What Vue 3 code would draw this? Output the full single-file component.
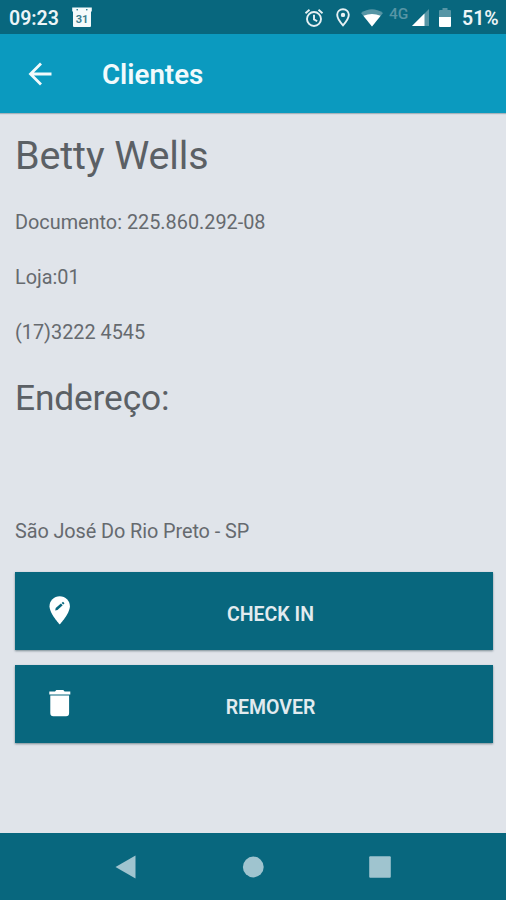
<script setup>
const details = ['Documento: 225.860.292-08', 'Loja:01', '(17)3222 4545']
const actions = [
  { label: 'CHECK IN', icon: 'pin' },
  { label: 'REMOVER', icon: 'trash' }
]
</script>

<template>
  <div class="screen">
    <div class="status">
      <span class="clock">09:23</span>
      <svg class="calendar" width="20" height="21" viewBox="0 0 20 21">
        <path d="M.2 .5h19.600v4h-.8V19q0 1-1 1H2q-1 0-1-1V4.500H.2z" fill="#f4fafb" />
        <circle cx="5.200" cy="2.800" r=".8" fill="#08677e" />
        <circle cx="14.800" cy="2.800" r=".8" fill="#08677e" />
        <text x="10" y="15.600" text-anchor="middle" font-size="11" font-weight="700" fill="#3d7e8f">31</text>
      </svg>
      <svg class="alarm" width="20" height="20" viewBox="0 0 20 20" fill="none" stroke="#e6f0f3" stroke-width="1.900">
        <circle cx="10" cy="11" r="7" />
        <path d="M1.500 5.200 5.500 1.800M18.500 5.200l-4-3.400M10 6.800v4.600l3.200 1.900" />
      </svg>
      <svg class="place" width="14" height="19" viewBox="0 0 14 19">
        <path d="M7 1.200C3.600 1.200 1.200 3.700 1.200 6.800 1.200 11 7 17.300 7 17.300s5.800-6.300 5.800-10.500C12.800 3.700 10.400 1.200 7 1.200z" fill="none" stroke="#e6f0f3" stroke-width="1.900" />
        <circle cx="7" cy="6.900" r="2.200" fill="#e6f0f3" />
      </svg>
      <svg class="wifi" width="22" height="18" viewBox="0 0 22 18">
        <path d="M0 4Q11-3.500 22 4L11 17.500z" fill="#5795a5" />
        <path d="M2.400 6.800Q11 3 19.600 6.800L11 17.500z" fill="#fff" />
      </svg>
      <span class="network">4G</span>
      <svg class="signal" width="17" height="17" viewBox="0 0 17 17">
        <path d="M0 17 17 0v17z" fill="#5795a5" />
        <path d="M0 17 12.500 4.500V17z" fill="#fff" />
      </svg>
      <svg class="battery" width="12" height="19" viewBox="0 0 12 19">
        <path d="M3.500 0h5v2H11q1 0 1 1v7H0V3q0-1 1-1h2.500z" fill="#5795a5" />
        <path d="M0 9h12v9q0 1-1 1H1q-1 0-1-1z" fill="#fff" />
      </svg>
      <span class="percent">51%</span>
    </div>

    <header class="appbar">
      <svg width="24" height="24" viewBox="0 0 24 24" fill="none" stroke="#f2fafc" stroke-width="2.800">
        <path d="M23.500 12H2.500M13 1.500 2.500 12 13 22.500" />
      </svg>
      <span class="heading">Clientes</span>
    </header>

    <main class="content">
      <h1>Betty Wells</h1>
      <p v-for="line in details" :key="line">{{ line }}</p>
      <h2>Endereço:</h2>
      <p class="city">São José Do Rio Preto - SP</p>
      <div class="actions">
        <button v-for="action in actions" :key="action.label" type="button">
          <svg v-if="action.icon === 'pin'" width="22" height="30" viewBox="0 0 22 30">
            <path d="M10.700 .3C4.900.3.500 4.700.500 10.300.500 17.500 10.700 28.500 10.700 28.500S20.900 17.500 20.900 10.300C20.900 4.700 16.500.3 10.700.3z" fill="#fff" />
            <path d="m6.200 14.600.5-2.500 5.200-4.600 1.800 1.800-5.200 4.700zM12.600 6.900l1.400-1.200 1.500 1.600-1.200 1.300z" fill="#08677e" />
          </svg>
          <svg v-else width="22" height="30" viewBox="0 0 22 30">
            <path d="M.3 2.500h5.700L7.300 1h7l1.300 1.500h5.700v3H.3zM1.300 6.500h18.800V24q0 3.300-3 3.300H4.300q-3 0-3-3.300z" fill="#fff" />
          </svg>
          <span class="label">{{ action.label }}</span>
        </button>
      </div>
    </main>

    <nav class="navbar">
      <svg width="22" height="24" viewBox="0 0 22 24"><path d="M.5 12 20.500.500v23z" fill="#9fc4cf" /></svg>
      <svg width="22" height="24" viewBox="0 0 22 24"><circle cx="11.300" cy="12" r="10.400" fill="#9fc4cf" /></svg>
      <svg width="22" height="24" viewBox="0 0 22 24"><rect x=".2" y="1.200" width="21.600" height="21.600" rx="1" fill="#9fc4cf" /></svg>
    </nav>
  </div>
</template>

<style>
body {
  margin: 0;
}
</style>

<style scoped>
.screen {
  display: flex;
  flex-direction: column;
  width: 506px;
  height: 900px;
  overflow: hidden;
  background: #e0e4ea;
  font-family: Roboto, sans-serif;
  color: #5b6065;
}
svg {
  display: block;
  flex: none;
}
.status {
  box-sizing: border-box;
  flex: none;
  display: flex;
  align-items: center;
  height: 34px;
  padding: 2px 8px 0 9px;
  background: #08677e;
  color: #edf5f7;
  font-size: 19.500px;
  font-weight: 600;
  line-height: 32px;
  white-space: nowrap;
}
.clock {
  width: 63px;
  padding-top: 1px;
}
.calendar {
  margin-bottom: 2px;
}
.alarm {
  margin-left: auto;
}
.place {
  margin-left: 12px;
}
.wifi {
  margin-left: 11px;
}
.alarm,
.place,
.wifi {
  margin-bottom: 1px;
}
.network {
  width: 23px;
  margin-left: 6px;
  padding-bottom: 8px;
  font-size: 15.500px;
  font-weight: 500;
  line-height: 20px;
  color: #5795a5;
}
.signal {
  margin-bottom: 1px;
}
.battery {
  margin-left: 10px;
  margin-bottom: 2px;
}
.percent {
  width: 36px;
  margin-left: 11px;
  padding-top: 1px;
}
.appbar {
  position: relative;
  box-sizing: border-box;
  flex: none;
  display: flex;
  align-items: center;
  height: 79px;
  padding-left: 28px;
  background: #0b9abf;
  box-shadow: 0 1px 1px rgba(60, 90, 100, 0.35);
  color: #f2fafc;
}
.heading {
  margin-left: 50px;
  padding-top: 2px;
  font-size: 27.700px;
  font-weight: 600;
  line-height: 36px;
}
.content {
  flex: 1;
  padding: 20px 13px 0 15px;
}
h1,
h2,
p {
  margin: 0;
  font-weight: 370;
  white-space: nowrap;
}
h1 {
  height: 46px;
  margin-bottom: 31px;
  font-size: 39.500px;
  line-height: 46px;
  letter-spacing: -0.120px;
}
p {
  height: 26px;
  margin-bottom: 29px;
  font-size: 19.850px;
  line-height: 26px;
  color: #666a6f;
}
h2 {
  height: 42px;
  margin-top: 31px;
  margin-bottom: 100px;
  font-size: 35.300px;
  line-height: 42px;
  letter-spacing: -0.150px;
}
.city {
  margin-bottom: 27px;
  letter-spacing: -0.080px;
}
.actions {
  display: grid;
  gap: 15px;
}
button {
  display: flex;
  align-items: center;
  height: 78px;
  padding: 0 34px;
  border: 0;
  background: #08677e;
  box-shadow: 0 1px 2px rgba(20, 50, 60, 0.5);
  font-family: inherit;
  font-size: 19.500px;
  font-weight: 600;
  color: #e2ebef;
}
.label {
  flex: 1;
  padding-top: 6px;
  padding-left: 11px;
  text-align: center;
}
.navbar {
  box-sizing: border-box;
  flex: none;
  display: flex;
  justify-content: space-between;
  align-items: center;
  height: 67px;
  padding: 0 115px;
  background: #08677e;
}
</style>
